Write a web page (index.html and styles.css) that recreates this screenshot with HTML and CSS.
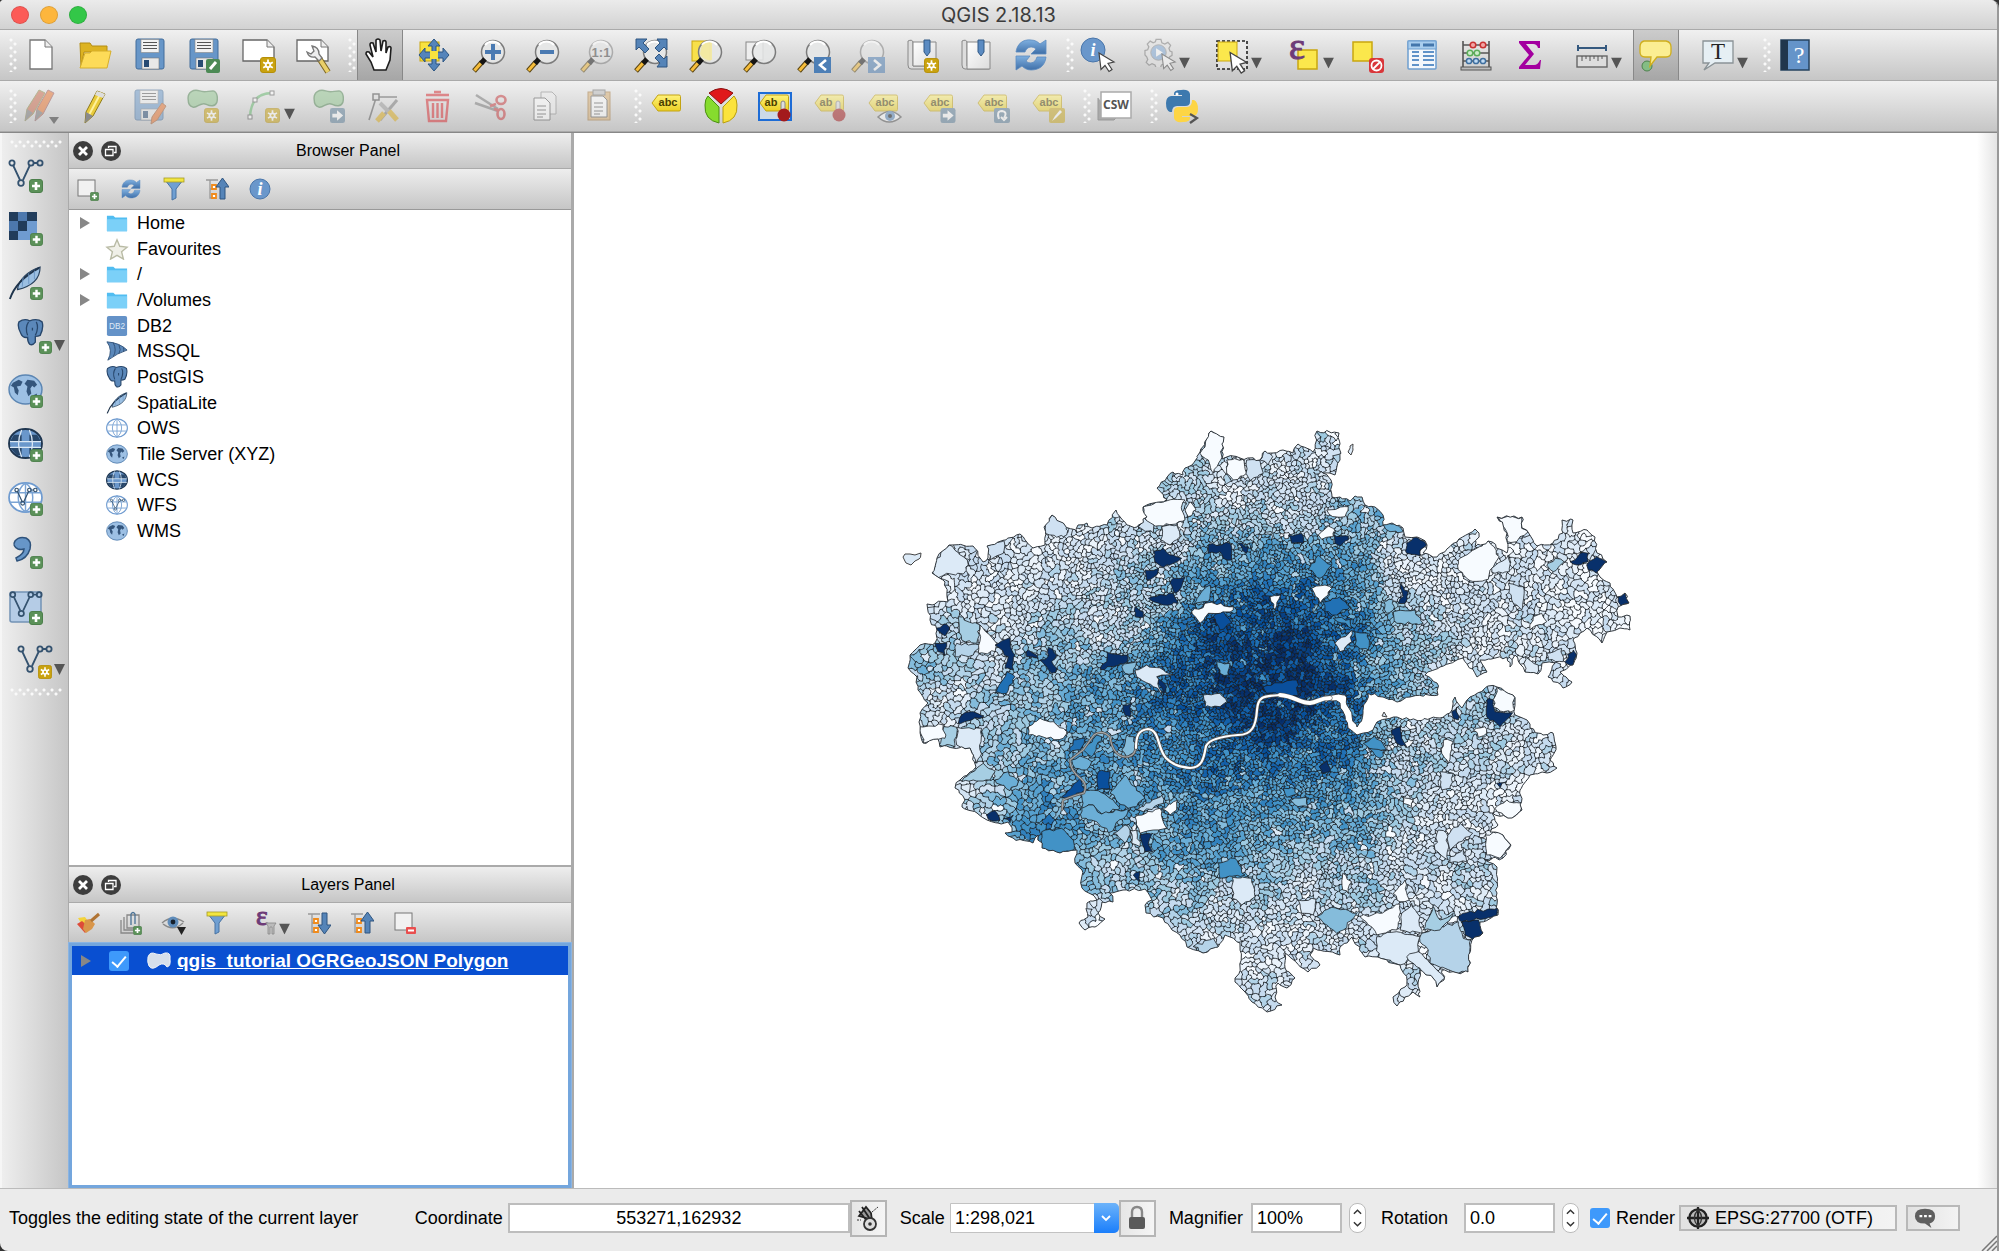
FILE: index.html
```html
<!DOCTYPE html>
<html lang="en">
<head>
<meta charset="utf-8">
<title>QGIS 2.18.13</title>
<link rel="stylesheet" href="styles.css">
</head>
<body>
<svg class="symbols" aria-hidden="true">
  <defs>
    <linearGradient id="gBlue" x1="0" y1="0" x2="0" y2="1"><stop offset="0" stop-color="#7fb0e0"/><stop offset="1" stop-color="#3f6fa8"/></linearGradient>
    <linearGradient id="gPage" x1="0" y1="0" x2="1" y2="1"><stop offset="0" stop-color="#fff"/><stop offset="1" stop-color="#dcdcdc"/></linearGradient>
    <linearGradient id="gYellow" x1="0" y1="0" x2="0" y2="1"><stop offset="0" stop-color="#fff27a"/><stop offset="1" stop-color="#ecd023"/></linearGradient>
  </defs>
  <symbol id="plus" viewBox="0 0 14 14"><rect x=".5" y=".5" width="13" height="13" rx="2.5" fill="#5b9159" stroke="#4c7f4b"/><path d="M7 3v8M3 7h8" stroke="#fff" stroke-width="2.6"/></symbol>
  <symbol id="star" viewBox="0 0 16 16"><rect x=".5" y=".5" width="15" height="15" rx="2.5" fill="#c9a20f" stroke="#b58f08"/><path d="M8 2.5v11M3.2 5.2l9.6 5.6M12.8 5.2l-9.6 5.6" stroke="#fff" stroke-width="1.8"/><circle cx="8" cy="8" r="3.2" fill="#fff"/><circle cx="8" cy="8" r="1.3" fill="#c9a20f"/></symbol>
  <symbol id="go" viewBox="0 0 16 16"><rect width="16" height="16" rx="2.5" fill="#5d7f99"/><path d="M2.500 6h5V2.500L14 8l-6.500 5.500V10h-5z" fill="#fff"/></symbol>
  <symbol id="lens" viewBox="0 0 40 40"><circle cx="24" cy="17" r="11.500" fill="#e6e7e7" fill-opacity=".85" stroke="#7b7b7b" stroke-width="1.500"/><path d="M16 10a10 10 0 0 1 15 0" fill="none" stroke="#fff" stroke-width="2"/><path d="M5 36l8-9" stroke="#5a4410" stroke-width="5"/><path d="M5.500 35.500l7-8" stroke="#f6bd3b" stroke-width="3"/><path d="M12 28.500l4-4.500" stroke="#151515" stroke-width="5"/></symbol>
  <symbol id="floppy" viewBox="0 0 40 40"><rect x="6" y="4" width="28" height="30" rx="2" fill="#6796c8" stroke="#426c9b"/><rect x="11" y="4.500" width="18" height="13" fill="#f2f2f2" stroke="#888" stroke-width=".6"/><path d="M13 7.500h14M13 10.500h14M13 13.500h14" stroke="#555"/><rect x="12" y="23" width="17" height="11" fill="#e8e8e8" stroke="#777" stroke-width=".6"/><rect x="14" y="25" width="5" height="7" fill="#284b73"/></symbol>
  <symbol id="refresh" viewBox="0 0 40 40"><path d="M5 17C6 9 12 4 20 5c4 0 7 2 9 4l6-4v14H20l5-5c-3-3-9-3-11 3z" fill="url(#gBlue)" stroke="#5c8bc0" stroke-width=".8"/><path d="M35 22c-1 9-7 13-15 13-4 0-7-2-9-4l-6 4V21h14l-4 5c3 3 9 3 11-4z" fill="url(#gBlue)" stroke="#5c8bc0" stroke-width=".8"/></symbol>
  <symbol id="cursor" viewBox="0 0 18 20"><path d="M1 1l15 9-6 1.500 4 6-3 2-4-6-4 4z" fill="#fff" stroke="#444" stroke-width="1.200"/></symbol>
  <symbol id="gear" viewBox="0 0 30 30"><path d="M12.500 1.500h5l1 3.500 3 1.200 3.200-1.700 2.800 3-1.700 3.200 1 2.800 2.200 1v3.500l-2.600 1.500-1 2.800 1.700 3-3 3-3-1.700-3 1.200-1.100 3h-4.500l-1.200-3-3-1.200-3 1.600-3-3 1.600-3-1.100-2.700L1 17.500V13l2.800-.8 1.200-3-1.600-3 3-3L9.500 5l2.200-1z" fill="#e4e4e4" stroke="#777" stroke-width="1.300"/><circle cx="15" cy="15" r="8" fill="#7da7d6" stroke="#888"/><path d="M12.500 10.500l7 4.500-7 4.500z" fill="#fff"/></symbol>
  <symbol id="tag" viewBox="0 0 30 18"><path d="M1 9l6-8h21q1.500 0 1.500 1.500v13q0 1.500-1.500 1.500H7z" fill="url(#gYellow)" stroke="#c3a313"/></symbol>
  <symbol id="blob" viewBox="0 0 32 22"><path d="M1 11C0 3 7 0 13 2c5 2 9 0 14 0 5 1 5 8 4 12-2 5-7 4-11 2-6-3-9 4-14 3-4-1-5-4-5-8z" fill="#8fc48d" stroke="#4f8351" stroke-width="1.500"/></symbol>
  <symbol id="page" viewBox="0 0 40 40"><path d="M9 5h15l7 7v22H9z" fill="#fff" stroke="#777" stroke-width="1.300"/><path d="M24 5v7h7" fill="#eee" stroke="#777"/></symbol>
  <symbol id="wide" viewBox="0 0 40 40"><path d="M4 5h24l7 7v14H4z" fill="#fff" stroke="#666" stroke-width="1.300"/><path d="M28 5v7h7" fill="#eee" stroke="#777"/></symbol>
  <symbol id="pencil" viewBox="0 0 24 36"><path d="M14 3l8 3-12 22-8 7 1-11z" fill="#e9cb3b" stroke="#8e7a1a"/><path d="M18 4.500L6 27" stroke="#fff19a" stroke-width="2"/><path d="M3 24l7 4-8 7z" fill="#8a8a8a"/><path d="M14 3l8 3-2 4-8-3z" fill="#ddd"/></symbol>
  <symbol id="vee" viewBox="0 0 36 36"><g fill="none" stroke="#34526f" stroke-width="1.800"><path d="M5 8l7 15M15 23l7-15M26 6h4"/><circle cx="4" cy="6" r="2.600"/><circle cx="13" cy="26" r="2.800"/><circle cx="23" cy="6" r="2.600"/><circle cx="32" cy="6" r="2.600"/></g></symbol>
  <symbol id="feather" viewBox="0 0 36 36"><path d="M34 1c0 11-7 20-24 24C11 15 21 5 34 1z" fill="#9bbfe2" stroke="#27405c" stroke-width="1.200"/><path d="M33 2C20 9 7 20 2 35" fill="none" stroke="#1f344c" stroke-width="2"/><path d="M16 12l-1 10M22 8l0 11M28 5v9" stroke="#6b96c4" fill="none"/></symbol>
  <symbol id="elephant" viewBox="0 0 28 28"><path d="M2 3q6-4 11-1 8-3 13 1 2 6-2 14-2 1-5 1l0 6q-3 4-6 2-2-2-2-7-5 1-7-4Q0 8 2 3z" fill="#5b88ba" stroke="#27466b" stroke-width="1.400"/><path d="M12 3q-4 6-1 14M20 3q3 6-1 14M16 9v3" fill="none" stroke="#27466b" stroke-width="1.300"/></symbol>
  <symbol id="globeMap" viewBox="0 0 36 32"><ellipse cx="18" cy="16" rx="17" ry="15" fill="#9dc0e4" stroke="#5c86b3" stroke-width="1.500"/><path d="M5 9l6-3 4 2-2 4-4 1 2 4-1 5-3-3-1-5-3-2zM20 6l7 1 3 4-3 3-2-2-2 3 1 5-3 3-2-5 1-5-3-3zM26 22l4-2-1 4z" fill="#34557c"/></symbol>
  <symbol id="globeGrid" viewBox="0 0 36 32"><ellipse cx="18" cy="16" rx="17" ry="15" fill="#fff" stroke="#6f9bd0" stroke-width="1.800"/><path d="M2 11h32M2 21h32M18 1v30M18 1C8 8 8 24 18 31M18 1c10 7 10 23 0 30" fill="none" stroke="#7ba4d4" stroke-width="1.500"/></symbol>
  <symbol id="globeDark" viewBox="0 0 36 32"><ellipse cx="18" cy="16" rx="17" ry="15" fill="#6a97cb" stroke="#1f3650" stroke-width="2"/><path d="M6 7h8v7H2zM22 7h8l4 7H22zM2 20h12v8H9zM22 20h12l-7 8h-5z" fill="#28476a"/><path d="M2 14h32M2 20h32M14 2c-4 9-4 19 0 28M22 2c4 9 4 19 0 28" fill="none" stroke="#dce8f4" stroke-width="1.300"/></symbol>
  <symbol id="folder" viewBox="0 0 24 20"><path d="M1 2h7l2 2h13v15H1z" fill="#51bdf1"/><path d="M1 6h22v13H1z" fill="#7bd0f8"/></symbol>
  <symbol id="funnel" viewBox="0 0 22 24"><path d="M2 3l7 9v11l4-2v-9l7-9z" fill="#6f9fd2" stroke="#4873a3"/><rect x="1" y="1" width="20" height="4" fill="#f2e640" stroke="#a79c25" stroke-width=".8"/></symbol>
  <symbol id="upTree" viewBox="0 0 24 24"><path d="M1 3h12M5 3v18h5M5 12h5" fill="none" stroke="#999" stroke-width="1.300"/><path d="M7 8h4v4H7zM7 17h4v4H7z" fill="#fff" stroke="#f08b1c" stroke-width="1.800"/><path d="M15 22V10h-4l6.500-9L24 10h-4v12z" fill="#5584b8" stroke="#2f5580"/></symbol>
  <symbol id="downTree" viewBox="0 0 24 24"><path d="M1 3h12M5 3v18h5M5 12h5" fill="none" stroke="#999" stroke-width="1.300"/><path d="M7 8h4v4H7zM7 17h4v4H7z" fill="#fff" stroke="#f08b1c" stroke-width="1.800"/><path d="M15 2v12h-4l6.500 9 6.500-9h-4V2z" fill="#5584b8" stroke="#2f5580"/></symbol>
  <symbol id="close" viewBox="0 0 20 20"><circle cx="10" cy="10" r="10" fill="#3d3d3d"/><path d="M6 6l8 8M14 6l-8 8" stroke="#fff" stroke-width="2.800"/></symbol>
  <symbol id="float" viewBox="0 0 20 20"><circle cx="10" cy="10" r="10" fill="#3d3d3d"/><path d="M7.500 7V5.500h7.500v6h-2M4.500 8.500h7.500v6H4.500z" fill="none" stroke="#fff" stroke-width="1.300"/></symbol>
  <symbol id="arrow" viewBox="0 0 12 12"><path d="M0 0h12L6 12z" fill="#555"/></symbol>
</svg>

<div class="window">
  <header class="titlebar">
    <div class="lights"><button class="light red" aria-label="Close window"></button><button class="light amber" aria-label="Minimise window"></button><button class="light green" aria-label="Zoom window"></button></div>
    <h1 class="title">QGIS 2.18.13</h1>
  </header>

  <nav class="toolbar" aria-label="Project and navigation">
    <span class="grip"></span>
    <div class="group file-group">
      <button class="tool" aria-label="New project"><svg viewBox="0 0 40 40"><use href="#page"/></svg></button>
      <button class="tool" aria-label="Open project"><svg viewBox="0 0 40 40"><path d="M5 8h10l2 3h15v6H9L6 32z" fill="#ddb321" stroke="#b48d12"/><path d="M10 18h5l2-2h19l-4 17H5z" fill="#fddb58" stroke="#d6ae2a"/></svg></button>
      <button class="tool" aria-label="Save"><svg viewBox="0 0 40 40"><use href="#floppy"/></svg></button>
      <button class="tool" aria-label="Save as"><svg viewBox="0 0 40 40"><use href="#floppy"/><rect x="22" y="24" width="14" height="14" rx="2" fill="#4c8a55"/><path d="M26 34l6-7" stroke="#fff" stroke-width="3"/></svg></button>
      <button class="tool" aria-label="New composer"><svg viewBox="0 0 40 40"><use href="#wide"/><use href="#star" x="21" y="22" width="16" height="16"/></svg></button>
      <button class="tool" aria-label="Composer manager"><svg viewBox="0 0 40 40"><use href="#wide"/><path d="M26 23l9 14" stroke="#7a6420" stroke-width="6"/><path d="M26 23l9 14" stroke="#e9cf6a" stroke-width="4"/><path d="M14 17q2 6 8 5l4 4 3-3-3-4q0-7-7-8l2 5-3 3z" fill="#eee" stroke="#777" stroke-width="1.300"/></svg></button>
    </div>
    <span class="grip"></span>
    <div class="group nav-group">
      <button class="tool pressed" aria-label="Pan map"><svg viewBox="0 0 40 40"><path d="M14 35l-3-8-5-8q0-3 3-2l4 5-3-12q0-3 3-2l3 9 0-12q2-2 4 0l1 11 2-10q3-1 3 1l0 11 2-6q3-1 3 1l-1 12-4 10z" fill="#fff" stroke="#1d1d1d" stroke-width="1.600"/></svg></button>
      <button class="tool" aria-label="Pan to selection"><svg viewBox="0 0 40 40"><rect x="6" y="7" width="19" height="19" fill="#f8e23f" stroke="#c9a60f"/><path d="M20 4l6 7h-4v6h7v-4l6 7-6 7v-4h-7v6h4l-6 7-6-7h4v-6h-7v4l-6-7 6-7v4h7v-6h-4z" fill="#5484bb" stroke="#2b5583"/><rect x="16" y="16" width="8" height="8" fill="#f8e23f"/></svg></button>
      <button class="tool" aria-label="Zoom in"><svg viewBox="0 0 40 40"><use href="#lens"/><path d="M24 9v16M16 17h16" stroke="#4a7ab2" stroke-width="4"/></svg></button>
      <button class="tool" aria-label="Zoom out"><svg viewBox="0 0 40 40"><use href="#lens"/><path d="M17 17h14" stroke="#4a7ab2" stroke-width="4"/></svg></button>
      <button class="tool dim" aria-label="Zoom to native resolution"><svg viewBox="0 0 40 40"><use href="#lens"/><text x="24" y="22" text-anchor="middle" class="glyph-one">1:1</text></svg></button>
      <button class="tool" aria-label="Zoom full"><svg viewBox="0 0 40 40"><use href="#lens"/><path d="M5 4h11l-4 4 6 6-4 4-6-6-3 3zM36 4H26l3 4-5 5 4 4 5-5 3 3zM36 32H26l3-4-5-5 4-4 5 5 3-3z" fill="#5584b8" stroke="#2f5580"/></svg></button>
      <button class="tool" aria-label="Zoom to selection"><svg viewBox="0 0 40 40"><rect x="6" y="6" width="18" height="20" fill="#f8e04a" stroke="#c9a60f"/><use href="#lens"/><path d="M16 10q6-4 10-2v17q-8 1-12-6z" fill="#f6e98e" opacity=".7"/></svg></button>
      <button class="tool" aria-label="Zoom to layer"><svg viewBox="0 0 40 40"><rect x="6" y="7" width="17" height="18" fill="#eee" stroke="#888"/><use href="#lens"/></svg></button>
      <button class="tool" aria-label="Zoom last"><svg viewBox="0 0 40 40"><use href="#lens"/><rect x="20" y="22" width="17" height="16" fill="#4d7fb6"/><path d="M32 25l-6 5 6 5" fill="none" stroke="#fff" stroke-width="2.600"/></svg></button>
      <button class="tool dim" aria-label="Zoom next"><svg viewBox="0 0 40 40"><use href="#lens"/><rect x="20" y="22" width="17" height="16" fill="#4d7fb6"/><path d="M26 25l6 5-6 5" fill="none" stroke="#fff" stroke-width="2.600"/></svg></button>
      <button class="tool" aria-label="New bookmark"><svg viewBox="0 0 40 40"><path d="M5 6q4-2 5 1v24h22v3H8q-3 0-3-4z" fill="#ddd" stroke="#888"/><path d="M10 7h23v24H10z" fill="url(#gPage)" stroke="#888"/><path d="M21 5h6v12l-3 4-3-4z" fill="#5b8bc2" stroke="#335a86"/><use href="#star" x="21" y="23" width="15" height="15"/></svg></button>
      <button class="tool" aria-label="Show bookmarks"><svg viewBox="0 0 40 40"><path d="M5 6q4-2 5 1v24h22v3H8q-3 0-3-4z" fill="#ddd" stroke="#888"/><path d="M10 7h23v27H10z" fill="url(#gPage)" stroke="#888"/><path d="M21 5h6v12l-3 4-3-4z" fill="#5b8bc2" stroke="#335a86"/></svg></button>
      <button class="tool" aria-label="Refresh"><svg viewBox="0 0 40 40"><use href="#refresh"/></svg></button>
    </div>
    <span class="grip"></span>
    <div class="group">
      <button class="tool" aria-label="Identify features"><svg viewBox="0 0 40 40"><circle cx="15" cy="15" r="12" fill="#6a97cb" stroke="#4a76aa"/><text x="15" y="21" text-anchor="middle" class="glyph-i">i</text><use href="#cursor" x="20" y="16" width="18" height="22"/></svg></button>
      <button class="tool drop" aria-label="Run feature action"><svg class="dim" viewBox="0 0 40 40"><use href="#gear" x="4" y="3" width="29" height="29"/><use href="#cursor" x="21" y="17" width="16" height="20"/></svg><svg class="caret" viewBox="0 0 12 12"><use href="#arrow"/></svg></button>
      <button class="tool drop" aria-label="Select features"><svg viewBox="0 0 40 40"><rect x="5" y="6" width="30" height="28" fill="#f4f4f4" fill-opacity=".4" stroke="#222" stroke-width="1.600" stroke-dasharray="3 2"/><rect x="6" y="7" width="19" height="19" fill="#fbe74c" stroke="#c9a60f"/><use href="#cursor" x="17" y="16" width="20" height="23"/></svg><svg class="caret" viewBox="0 0 12 12"><use href="#arrow"/></svg></button>
      <button class="tool drop" aria-label="Select by expression"><svg viewBox="0 0 40 40"><rect x="14" y="15" width="19" height="19" fill="#fbe74c" stroke="#c9a60f" stroke-width="1.500"/><text x="5" y="24" class="glyph-eps">ε</text></svg><svg class="caret" viewBox="0 0 12 12"><use href="#arrow"/></svg></button>
      <button class="tool" aria-label="Deselect features"><svg viewBox="0 0 40 40"><rect x="5" y="7" width="19" height="19" fill="#fbe74c" stroke="#c9a60f" stroke-width="1.500"/><rect x="21" y="23" width="15" height="15" rx="3" fill="#d9363a"/><circle cx="28.500" cy="30.500" r="5" fill="none" stroke="#fff" stroke-width="1.800"/><path d="M25 34l7-7" stroke="#fff" stroke-width="1.800"/></svg></button>
      <button class="tool" aria-label="Open attribute table"><svg viewBox="0 0 40 40"><rect x="6" y="6" width="28" height="28" rx="1" fill="#f3f7fb" stroke="#6d9ed0" stroke-width="1.500"/><rect x="6" y="6" width="28" height="8" fill="#a8cdee" stroke="#6d9ed0"/><path d="M9 10h9M21 10h11" stroke="#4376ac" stroke-width="3"/><path d="M10 17h7M21 17h11M10 21h7M21 21h11M10 25h7M21 25h11M10 30h7M21 30h11" stroke="#5f92c8" stroke-width="1.800"/></svg></button>
      <button class="tool" aria-label="Field calculator"><svg viewBox="0 0 40 40"><path d="M7 6v26M33 6v26M7 10h26M7 18h26M7 26h26" stroke="#555" stroke-width="1.600"/><rect x="5" y="32" width="30" height="3" fill="#bbb" stroke="#555"/><g stroke-width="1.500"><g fill="#f2a5a5" stroke="#c83232"><circle cx="17" cy="10" r="2.800"/><circle cx="27" cy="10" r="2.800"/></g><g fill="#cdeccb" stroke="#5cae5a"><circle cx="14" cy="18" r="2.800"/><circle cx="21" cy="18" r="2.800"/></g><g fill="#c2dcf4" stroke="#3f6f9f"><circle cx="13" cy="26" r="2.600"/><circle cx="20" cy="26" r="2.600"/><circle cx="27" cy="26" r="2.600"/></g></g></svg></button>
      <button class="tool" aria-label="Statistical summary"><svg viewBox="0 0 40 40"><path d="M9 6h21v7h-2q-1-4-5-4h-7l8 10-9 11h9q4 0 6-5h1l-1 9H9v-2l10-12L9 8z" fill="#a3009f"/></svg></button>
      <button class="tool drop" aria-label="Measure"><svg viewBox="0 0 40 40"><path d="M6 13h28M6 10v6M34 10v6" stroke="#35597f" stroke-width="2"/><rect x="5" y="21" width="30" height="11" fill="#ddd" stroke="#666" stroke-width="1.400"/><path d="M10 21v5M14 21v3M18 21v5M22 21v3M26 21v5M30 21v3" stroke="#555"/></svg><svg class="caret" viewBox="0 0 12 12"><use href="#arrow"/></svg></button>
      <button class="tool pressed" aria-label="Map tips"><svg viewBox="0 0 40 40"><ellipse cx="11" cy="31" rx="5" ry="5" fill="#84bd84" stroke="#4e824e"/><path d="M8 6h22q5 1 5 6v5q0 5-5 5h-9l-7 9 1-9H9q-5 0-5-5v-5q0-5 4-6z" fill="#fbee92" stroke="#cfae1d" stroke-width="1.300"/></svg></button>
      <button class="tool drop" aria-label="Text annotation"><svg viewBox="0 0 40 40"><path d="M5 6h30v22H17L6 35l5-7H5z" fill="#e6eff4" stroke="#8a9296" stroke-width="1.300"/><text x="20" y="24" text-anchor="middle" class="glyph-t">T</text></svg><svg class="caret" viewBox="0 0 12 12"><use href="#arrow"/></svg></button>
    </div>
    <span class="grip"></span>
    <button class="tool" aria-label="Help"><svg viewBox="0 0 40 40"><rect x="6" y="5" width="28" height="30" fill="#6594c9" stroke="#26435f" stroke-width="1.500"/><rect x="6" y="5" width="7" height="30" fill="#20364d"/><text x="24" y="28" text-anchor="middle" class="glyph-q">?</text></svg></button>
  </nav>

  <nav class="toolbar" aria-label="Digitizing and labels">
    <span class="grip"></span>
    <div class="group">
      <button class="tool dim" aria-label="Current edits"><svg viewBox="0 0 40 40"><path d="M18 4l6 3-12 21-8 7 2-12z" fill="#c9684a" stroke="#884"/><path d="M27 4l6 3-11 21-8 7 2-12z" fill="#e8722d" stroke="#955"/><path d="M6 23l6 4-8 8zM16 23l6 4-8 8z" fill="#777"/><path d="M28 31h10l-5 7z" fill="#333"/></svg></button>
      <button class="tool" aria-label="Toggle editing"><svg viewBox="0 0 40 40"><use href="#pencil" x="8" y="2" width="24" height="36"/></svg></button>
      <button class="tool dim" aria-label="Save layer edits"><svg viewBox="0 0 40 40"><use href="#floppy"/><path d="M33 17l4 3-9 14-6 4 1-7z" fill="#e8722d" stroke="#a65a2d"/></svg></button>
      <button class="tool dim" aria-label="Add feature"><svg viewBox="0 0 40 40"><use href="#blob" x="4" y="3" width="31" height="21"/><use href="#star" x="21" y="22" width="15" height="15"/></svg></button>
      <button class="tool drop" aria-label="Add curve"><svg class="dim" viewBox="0 0 40 40"><path d="M5 31q1-24 22-24" fill="none" stroke="#62b56a" stroke-width="2.500"/><g fill="#fff" stroke="#555"><rect x="3" y="29" width="4" height="4"/><rect x="8" y="12" width="4" height="4"/><rect x="25" y="5" width="4" height="4"/></g><use href="#star" x="20" y="22" width="15" height="15"/></svg><svg class="caret" viewBox="0 0 12 12"><use href="#arrow"/></svg></button>
      <button class="tool dim" aria-label="Move feature"><svg viewBox="0 0 40 40"><use href="#blob" x="4" y="3" width="31" height="21"/><use href="#go" x="21" y="22" width="15" height="15"/></svg></button>
      <button class="tool dim" aria-label="Node tool"><svg viewBox="0 0 40 40"><path d="M6 34l7-22M16 11h18" stroke="#555" stroke-width="1.600"/><rect x="10" y="8" width="6" height="6" fill="#ddd" stroke="#444" stroke-width="1.500"/><path d="M34 14L17 34" stroke="#777" stroke-width="3"/><path d="M17 17l9 9" stroke="#999" stroke-width="4"/><path d="M26 25l8 9M21 27l-7 8" stroke="#d8a91a" stroke-width="5"/></svg></button>
      <button class="tool dim" aria-label="Delete selected"><svg viewBox="0 0 40 40"><path d="M9 9h23M17 6h7M10 14h21l-2 21H12zM16 17v15M20.500 17v15M25 17v15" fill="none" stroke="#d62b30" stroke-width="2.400"/></svg></button>
      <button class="tool dim" aria-label="Cut features"><svg viewBox="0 0 40 40"><path d="M4 17l23 8M5 9l22 14" stroke="#777" stroke-width="2.500"/><g fill="none" stroke="#c73a3d" stroke-width="2.600"><ellipse cx="30" cy="14" rx="4.500" ry="4"/><ellipse cx="30" cy="28" rx="3.500" ry="5"/><path d="M25 18l-6 2M27 24l-4-1"/></g></svg></button>
      <button class="tool dim" aria-label="Copy features"><svg viewBox="0 0 40 40"><path d="M16 6h11l4 4v18H16z" fill="#eee" stroke="#888"/><path d="M9 12h11l5 5v17H9z" fill="#fff" stroke="#555"/><path d="M12 20h9M12 24h9M12 28h9M12 31h6" stroke="#555"/></svg></button>
      <button class="tool dim" aria-label="Paste features"><svg viewBox="0 0 40 40"><rect x="9" y="6" width="22" height="28" fill="#d9ae70" stroke="#a4763a"/><path d="M12 10h12l4 4v17H12z" fill="#fff" stroke="#555"/><rect x="14" y="4" width="12" height="5" fill="#bbb" stroke="#666"/><path d="M15 17h9M15 21h9M15 25h9M15 28h6" stroke="#555"/></svg></button>
    </div>
    <span class="grip"></span>
    <div class="group label-group">
      <button class="tool" aria-label="Layer labeling options"><svg viewBox="0 0 40 40"><use href="#tag" x="5" y="8" width="30" height="18"/><text x="22" y="20" text-anchor="middle" class="glyph-abc">abc</text></svg></button>
      <button class="tool" aria-label="Diagram options"><svg viewBox="0 0 40 40"><path d="M20 18L8 7q12-9 24 0z" fill="#e0181b" stroke="#8b1010"/><path d="M18 21v16Q3 34 4 19q0-6 3-9z" fill="#86dc2e" stroke="#4b8f12"/><path d="M22 21v16q15-3 14-18 0-6-3-9z" fill="#fbe33c" stroke="#b89e10"/></svg></button>
      <button class="tool" aria-label="Highlight pinned labels"><svg viewBox="0 0 40 40"><rect x="4" y="7" width="32" height="27" fill="#cbd9e8" stroke="#1d6cd6" stroke-width="2"/><use href="#tag" x="4" y="8" width="30" height="18"/><text x="16" y="20" text-anchor="middle" class="glyph-abc">ab</text><rect x="26" y="15" width="4" height="14" rx="2" fill="#ddd" stroke="#888"/><circle cx="29" cy="29" r="6.500" fill="#a31a1c"/></svg></button>
      <button class="tool dim" aria-label="Pin labels"><svg viewBox="0 0 40 40"><use href="#tag" x="4" y="8" width="30" height="18"/><text x="16" y="20" text-anchor="middle" class="glyph-abc">ab</text><rect x="26" y="15" width="4" height="14" rx="2" fill="#ddd" stroke="#888"/><circle cx="29" cy="29" r="6.500" fill="#a31a1c"/></svg></button>
      <button class="tool dim" aria-label="Show or hide labels"><svg viewBox="0 0 40 40"><use href="#tag" x="4" y="8" width="30" height="18"/><text x="21" y="20" text-anchor="middle" class="glyph-abc">abc</text><path d="M14 31q12-11 23 0-12 10-23 0z" fill="#fff" stroke="#555" stroke-width="1.500"/><circle cx="26" cy="30" r="5" fill="#5787ba"/><circle cx="26" cy="30" r="2" fill="#111"/></svg></button>
      <button class="tool dim" aria-label="Move label"><svg viewBox="0 0 40 40"><use href="#tag" x="4" y="8" width="30" height="18"/><text x="21" y="20" text-anchor="middle" class="glyph-abc">abc</text><use href="#go" x="21" y="22" width="16" height="15"/></svg></button>
      <button class="tool dim" aria-label="Rotate label"><svg viewBox="0 0 40 40"><use href="#tag" x="4" y="8" width="30" height="18"/><text x="21" y="20" text-anchor="middle" class="glyph-abc">abc</text><rect x="21" y="22" width="16" height="15" rx="2" fill="#5d7f99"/><path d="M26 33q-3-8 3-8 6 1 2 7M28 31l3 3 3-3" fill="none" stroke="#fff" stroke-width="2"/></svg></button>
      <button class="tool dim" aria-label="Change label"><svg viewBox="0 0 40 40"><use href="#tag" x="4" y="8" width="30" height="18"/><text x="21" y="20" text-anchor="middle" class="glyph-abc">abc</text><rect x="21" y="22" width="16" height="15" rx="2" fill="#c9a820"/><path d="M24 35l3-5 5-6 2 2-6 6z" fill="#fff"/></svg></button>
    </div>
    <span class="grip"></span>
    <button class="tool" aria-label="MetaSearch catalogue"><svg viewBox="0 0 40 40"><path d="M3 12v22h16l3-3" fill="#aaa" stroke="#999"/><rect x="6" y="6" width="30" height="26" fill="#fff" stroke="#aaa" stroke-width="1.500"/><text x="21" y="23" text-anchor="middle" class="glyph-csw">CSW</text></svg></button>
    <span class="grip"></span>
    <button class="tool" aria-label="Python console"><svg viewBox="0 0 40 40"><path d="M19 4q8-1 9 4v8q0 4-5 4h-8q-5 0-5 6H8q-4-1-4-9 0-6 5-7h11V9h-8q-1-5 7-5z" fill="#3d79ae"/><path d="M21 36q-8 1-9-4v-7q0-4 5-4h8q5 0 5-7h2q4 2 4 9 0 7-5 7H20v1h8q1 5-7 5z" fill="#fdd545"/><circle cx="15" cy="8" r="1.500" fill="#fff"/><path d="M28 28l7 4-7 5" fill="none" stroke="#555" stroke-width="2.200"/></svg></button>
  </nav>

  <div class="workspace">
    <nav class="sidebar" aria-label="Manage layers">
      <span class="grip flat"></span>
      <button class="source" aria-label="Add vector layer"><svg viewBox="0 0 36 36"><use href="#vee"/><use href="#plus" x="21" y="22" width="14" height="14"/></svg></button>
      <button class="source" aria-label="Add raster layer"><svg viewBox="0 0 36 36"><rect x="1" y="1" width="28" height="28" fill="#6f9bd0"/><path d="M1 1h9v9H1zM19 1h10v9H19zM10 10h9v10h-9zM1 20h9v9H1z" fill="#213c5b"/><path d="M10 1h9v9h-9zM1 10h9v10H1z" fill="#4d78ad"/><use href="#plus" x="22" y="22" width="13" height="13"/></svg></button>
      <button class="source" aria-label="Add SpatiaLite layer"><svg viewBox="0 0 36 36"><use href="#feather" x="0" y="1" width="34" height="34"/><use href="#plus" x="22" y="22" width="13" height="13"/></svg></button>
      <button class="source inset" aria-label="Add PostGIS layer"><svg viewBox="0 0 36 36"><use href="#elephant" x="0" y="0" width="27" height="27"/><use href="#plus" x="22" y="22" width="13" height="13"/></svg><svg class="caret" viewBox="0 0 12 12"><use href="#arrow"/></svg></button>
      <button class="source" aria-label="Add WMS layer"><svg viewBox="0 0 36 36"><use href="#globeMap" x="0" y="1" width="35" height="31"/><use href="#plus" x="22" y="22" width="13" height="13"/></svg></button>
      <button class="source" aria-label="Add WCS layer"><svg viewBox="0 0 36 36"><use href="#globeDark" x="0" y="1" width="35" height="31"/><use href="#plus" x="22" y="22" width="13" height="13"/></svg></button>
      <button class="source" aria-label="Add WFS layer"><svg viewBox="0 0 36 36"><use href="#globeGrid" x="0" y="1" width="35" height="31"/><use href="#vee" x="6" y="4" width="24" height="26"/><use href="#plus" x="22" y="22" width="13" height="13"/></svg></button>
      <button class="source" aria-label="Add delimited text layer"><svg viewBox="0 0 36 36"><path d="M7 6q4-5 11-3 6 3 4 11-3 10-13 12l-1-3q8-4 8-9-3 1-6 0-6-3-3-8z" fill="#6796c8" stroke="#2e527b" stroke-width="1.500"/><use href="#plus" x="22" y="21" width="13" height="13"/></svg></button>
      <button class="source" aria-label="Add virtual layer"><svg viewBox="0 0 36 36"><rect x="2" y="3" width="31" height="30" rx="2" fill="#b5cce6" stroke="#7392b5" stroke-width="1.500"/><use href="#vee" x="1" y="0" width="34" height="34"/><use href="#plus" x="21" y="22" width="14" height="14"/></svg></button>
      <button class="source inset" aria-label="New shapefile layer"><svg viewBox="0 0 36 36"><use href="#vee"/><use href="#star" x="21" y="22" width="14" height="14"/></svg><svg class="caret" viewBox="0 0 12 12"><use href="#arrow"/></svg></button>
      <span class="grip flat"></span>
    </nav>

    <aside class="docks">
      <section class="dock browser">
        <div class="dock-title"><button class="round" aria-label="Close Browser Panel"><svg viewBox="0 0 20 20"><use href="#close"/></svg></button><button class="round" aria-label="Float Browser Panel"><svg viewBox="0 0 20 20"><use href="#float"/></svg></button><h2>Browser Panel</h2></div>
        <div class="dock-tools">
          <button class="mini" aria-label="Add selected layers"><svg viewBox="0 0 24 24"><rect x="2" y="3" width="17" height="16" fill="#f1f1f1" stroke="#777"/><use href="#plus" x="14" y="15" width="9" height="9"/></svg></button>
          <button class="mini" aria-label="Refresh"><svg viewBox="0 0 24 24"><use href="#refresh"/></svg></button>
          <button class="mini" aria-label="Filter browser"><svg viewBox="0 0 24 24"><use href="#funnel"/></svg></button>
          <button class="mini" aria-label="Collapse all"><svg viewBox="0 0 24 24"><use href="#upTree"/></svg></button>
          <button class="mini" aria-label="Properties"><svg viewBox="0 0 24 24"><circle cx="12" cy="12" r="10" fill="#6a97cb" stroke="#4a76aa"/><text x="12" y="18" text-anchor="middle" class="glyph-i">i</text></svg></button>
        </div>
        <ul class="tree">
          <li><span class="expander"></span><svg viewBox="0 0 24 24"><use href="#folder" y="2" width="24" height="20"/></svg>Home</li>
          <li><span class="expander none"></span><svg viewBox="0 0 24 24"><path d="M12 2l3 7 8 1-6 5 2 8-7-4-7 4 2-8-6-5 8-1z" fill="#f0f0e8" stroke="#b9bba5" stroke-width="1.500"/></svg>Favourites</li>
          <li><span class="expander"></span><svg viewBox="0 0 24 24"><use href="#folder" y="2" width="24" height="20"/></svg>/</li>
          <li><span class="expander"></span><svg viewBox="0 0 24 24"><use href="#folder" y="2" width="24" height="20"/></svg>/Volumes</li>
          <li><span class="expander none"></span><svg viewBox="0 0 24 24"><rect x="1" y="1" width="22" height="22" rx="2" fill="#6492c8"/><text x="12" y="15" text-anchor="middle" class="glyph-db">DB2</text></svg>DB2</li>
          <li><span class="expander none"></span><svg viewBox="0 0 24 24"><path d="M1 2q14 1 22 9-10 3-21 11 6-11-1-20z" fill="#5b88ba" stroke="#34557c"/><path d="M8 3q4 8 0 15M14 5q3 6 0 10M19 8q1 3 0 5" fill="none" stroke="#2f4f76"/></svg>MSSQL</li>
          <li><span class="expander none"></span><svg viewBox="0 0 24 24"><use href="#elephant"/></svg>PostGIS</li>
          <li><span class="expander none"></span><svg viewBox="0 0 24 24"><use href="#feather"/></svg>SpatiaLite</li>
          <li><span class="expander none"></span><svg viewBox="0 0 24 24"><use href="#globeGrid"/></svg>OWS</li>
          <li><span class="expander none"></span><svg viewBox="0 0 24 24"><use href="#globeMap"/></svg>Tile Server (XYZ)</li>
          <li><span class="expander none"></span><svg viewBox="0 0 24 24"><use href="#globeDark"/></svg>WCS</li>
          <li><span class="expander none"></span><svg viewBox="0 0 24 24"><use href="#globeGrid"/><use href="#vee" x="4" y="4" width="17" height="17"/></svg>WFS</li>
          <li><span class="expander none"></span><svg viewBox="0 0 24 24"><use href="#globeMap"/></svg>WMS</li>
        </ul>
      </section>
      <section class="dock layers">
        <div class="dock-title"><button class="round" aria-label="Close Layers Panel"><svg viewBox="0 0 20 20"><use href="#close"/></svg></button><button class="round" aria-label="Float Layers Panel"><svg viewBox="0 0 20 20"><use href="#float"/></svg></button><h2>Layers Panel</h2></div>
        <div class="dock-tools">
          <button class="mini" aria-label="Layer styling"><svg viewBox="0 0 24 24"><path d="M2 7l7-1 5 7-6 4z" fill="#f3d33a"/><path d="M1 13l5-3 8 7-5 5z" fill="#dd4b39"/><path d="M9 9l5-1 5 5-3 5-6 4-3-4z" fill="#d9964a"/><path d="M15 10l8-7" stroke="#b07434" stroke-width="3"/></svg></button>
          <button class="mini" aria-label="Add group"><svg viewBox="0 0 24 24"><path d="M2 9v13h12M5 6v13h12M8 4h12v13H8z" fill="none" stroke="#888" stroke-width="1.300"/><path d="M12 14V3q2-3 4 0v10" fill="none" stroke="#4a7296" stroke-width="1.300"/><use href="#plus" x="14" y="15" width="9" height="9"/></svg></button>
          <button class="mini" aria-label="Manage visibility"><svg viewBox="0 0 24 24"><path d="M0 12Q10 3 22 11M1 13q10 8 20-1" fill="none" stroke="#888" stroke-width="1.300"/><circle cx="11" cy="11" r="5.500" fill="#5f8cba"/><circle cx="11" cy="11" r="2.400" fill="#16202c"/><path d="M15 16h9l-4.500 8z" fill="#222"/></svg></button>
          <button class="mini" aria-label="Filter legend"><svg viewBox="0 0 24 24"><use href="#funnel"/></svg></button>
          <button class="mini menu" aria-label="Filter by expression"><svg viewBox="0 0 24 24"><text x="0" y="14" class="glyph-eps">ε</text><path d="M10 12h10l-2 3v8h-2v-7h-2v7h-2v-8z" fill="#bbb" stroke="#888" stroke-width=".8"/></svg><svg class="caret" viewBox="0 0 12 12"><use href="#arrow"/></svg></button>
          <button class="mini" aria-label="Expand all"><svg viewBox="0 0 24 24"><use href="#downTree"/></svg></button>
          <button class="mini" aria-label="Collapse all"><svg viewBox="0 0 24 24"><use href="#upTree"/></svg></button>
          <button class="mini" aria-label="Remove layer"><svg viewBox="0 0 24 24"><rect x="2" y="2" width="17" height="17" fill="#f1f1f1" stroke="#777"/><rect x="13" y="16" width="10" height="7" rx="1" fill="#e94e4e"/><path d="M15 19.500h6" stroke="#fff" stroke-width="2"/></svg></button>
        </div>
        <div class="layer-list">
          <div class="layer-row"><span class="expander"></span><input type="checkbox" id="layer0" class="check" checked><svg viewBox="0 0 24 20"><path d="M1 6q2-6 8-3 5 2 9-1 6-1 5 6 1 7-3 8-3-5-8-2-7 6-10 1-2-4-1-9z" fill="#d5dfeb" stroke="#f0f3f7"/></svg><label for="layer0">qgis_tutorial OGRGeoJSON Polygon</label></div>
        </div>
      </section>
    </aside>

    <main class="map"><svg id="canvas" viewBox="574 134 1423 1053" role="img" aria-label="Population density choropleth"></svg></main>
  </div>

  <footer class="status">
    <span class="message">Toggles the editing state of the current layer</span>
    <label for="coord" class="lbl">Coordinate</label>
    <input id="coord" class="field coord" value="553271,162932">
    <button class="square" aria-label="Toggle extents"><svg viewBox="0 0 24 28"><path d="M3 12L10 3l5 6 1 8-6-3zM6 3l8 12M3 7l8 10" fill="#999" stroke="#222" stroke-width="1.800"/><circle cx="14" cy="20" r="6" fill="#ddd" stroke="#333" stroke-width="1.800"/><circle cx="14" cy="20" r="1.800" fill="#333"/><path d="M16 8l6-5M1 16h4" stroke="#333" stroke-dasharray="2 1"/></svg></button>
    <label for="scale" class="lbl scale-label">Scale</label>
    <span class="combo"><select id="scale"><option>1:298,021</option></select><span class="cap"><svg viewBox="0 0 12 8"><path d="M2 2l4 4 4-4" fill="none" stroke="#fff" stroke-width="1.800"/></svg></span></span>
    <button class="square" aria-label="Lock scale"><svg viewBox="0 0 24 28"><path d="M7 14V8q0-5 5-5t5 5v6" fill="none" stroke="#888" stroke-width="2.400"/><rect x="4" y="13" width="16" height="12" rx="2" fill="#5a5a5a"/></svg></button>
    <label for="mag" class="lbl mag-label">Magnifier</label>
    <input id="mag" class="field num" value="100%">
    <span class="spin"><button aria-label="Increase magnifier"><svg viewBox="0 0 10 6"><path d="M1 5l4-4 4 4"/></svg></button><button aria-label="Decrease magnifier"><svg viewBox="0 0 10 6"><path d="M1 1l4 4 4-4"/></svg></button></span>
    <label for="rot" class="lbl rot-label">Rotation</label>
    <input id="rot" class="field num" value="0.0">
    <span class="spin"><button aria-label="Increase rotation"><svg viewBox="0 0 10 6"><path d="M1 5l4-4 4 4"/></svg></button><button aria-label="Decrease rotation"><svg viewBox="0 0 10 6"><path d="M1 1l4 4 4-4"/></svg></button></span>
    <input type="checkbox" id="render" class="check" checked><label for="render" class="render-label">Render</label>
    <button class="flat-button crs"><svg viewBox="0 0 24 24"><circle cx="12" cy="12" r="9.500" fill="#bbb" stroke="#222" stroke-width="2.500"/><path d="M12 0v24M0 12h24" stroke="#222" stroke-width="2.500"/><path d="M12 3q-8 9 0 18M12 3q8 9 0 18" fill="none" stroke="#333" stroke-width="1.400"/></svg>EPSG:27700 (OTF)</button>
    <button class="flat-button log" aria-label="Messages"><svg viewBox="0 0 24 24"><path d="M12 2q11 0 11 8 0 6-6 8l2 5-7-5Q1 18 1 10q0-8 11-8z" fill="#5f5f5f"/><path d="M6 10h3M11 10h3M16 10h3" stroke="#fff" stroke-width="2.500"/></svg></button>
    <svg class="resize" viewBox="0 0 16 16"><path d="M1 16L16 1M6 16L16 6M11 16l5-5" stroke="#777" stroke-width="1.500"/></svg>
  </footer>
</div>
<script src="map.js"></script>
</body>
</html>
```

FILE: styles.css
```css
* { box-sizing: border-box; }

body {
  margin: 0;
  background: #333;
  color: #000;
  font: 18px/24px "Liberation Sans", Arial, sans-serif;
}

button {
  margin: 0;
  padding: 0;
  border: 0;
  background: none;
  color: inherit;
  font: inherit;
}

h1, h2, ul { margin: 0; padding: 0; font-weight: normal; }

.symbols { position: absolute; width: 0; height: 0; }

.window {
  display: flex;
  flex-direction: column;
  height: 100vh;
  overflow: hidden;
  border-right: 2px solid #999;
  border-radius: 4px 8px 0 8px;
  background: #ebebeb;
}

/* title bar */
.titlebar {
  display: flex;
  align-items: center;
  flex: none;
  height: 30px;
  padding: 0 11px;
  border-bottom: 1px solid #aaa;
  background: linear-gradient(#ebebeb, #d2d2d2);
}
.lights { display: flex; gap: 11px; width: 100px; }
.light { width: 18px; height: 18px; border: 1px solid rgba(0, 0, 0, .12); border-radius: 50%; }
.red { background: #fc5b57; }
.amber { background: #fdb63d; }
.green { background: #33c748; }
.title { flex: 1; margin-right: 100px; text-align: center; color: #3c3c3c; font: 20px/28px Inter, sans-serif; }

/* toolbars */
.toolbar {
  display: flex;
  flex: none;
  height: 51px;
  padding-left: 9px;
  border-bottom: 1px solid #aaa;
  background: linear-gradient(#f0f0f0, #c6c6c6);
}
.toolbar .grip:not(:first-child) { margin-left: 12px; }
.grip {
  flex: none;
  align-self: center;
  width: 9px;
  height: 34px;
  background:
    radial-gradient(circle at 2px 2px, #fafafa 1px, transparent 2px) 0 0 / 9px 8px,
    radial-gradient(circle at 6px 6px, #fafafa 1px, transparent 2px) 0 0 / 9px 8px;
}
.group { display: flex; gap: 8px; }
.file-group, .nav-group, .label-group { justify-content: space-between; gap: 0; }
.file-group { width: 318px; }
.nav-group { width: 697px; }
.label-group { width: 428px; }
.tool { display: flex; align-items: center; flex: none; width: 46px; padding: 0 3px; }
.tool svg { flex: none; width: 40px; height: 40px; overflow: visible; }
.drop { width: 56px; margin-left: 8px; }
.dim { opacity: .5; }
.pressed { background: linear-gradient(#ccc, #a6a6a6); box-shadow: inset 1px 0 #888, inset -1px 0 #888; }
.tool .caret { width: 11px; height: 12px; margin: 16px 0 0 -1px; }

/* body */
.workspace { display: flex; flex: 1; min-height: 0; border-top: 1px solid #888; }
.sidebar {
  flex: none;
  display: flex;
  flex-direction: column;
  width: 68px;
  padding-top: 7px;
  border-left: 2px solid #f6f6f6;
  background: linear-gradient(90deg, #eee, #c6c6c6);
}
.grip.flat {
  align-self: stretch;
  width: auto;
  height: 8px;
  margin: 0 6px 0 8px;
  background:
    radial-gradient(circle at 2px 2px, #fafafa 1px, transparent 2px) 0 0 / 8px 9px,
    radial-gradient(circle at 6px 6px, #fafafa 1px, transparent 2px) 0 0 / 8px 9px;
}
.source { display: flex; align-items: center; height: 54px; padding-left: 6px; flex: none; }
.source svg { flex: none; width: 36px; height: 36px; }
.inset { padding-left: 15px; }
.source .caret { width: 11px; height: 11px; margin: 16px 0 0 1px; }

.docks { display: flex; flex-direction: column; flex: none; width: 506px; padding-right: 3px; border-left: 1px solid #aaa; background: #aaa; }
.dock { display: flex; flex-direction: column; min-height: 0; }
.browser { flex: 1; background: #fff; }
.layers { flex: none; margin-top: 2px; }
.dock-title {
  display: flex;
  align-items: center;
  gap: 8px;
  height: 36px;
  padding: 0 4px;
  border-bottom: 1px solid #aaa;
  background: linear-gradient(#eee, #c6c6c6);
}
.dock-title h2 { flex: 1; text-align: center; font-size: 16px; line-height: 20px; }
.round { width: 20px; height: 20px; }
.round svg { display: block; width: 20px; height: 20px; }
.dock-tools {
  display: flex;
  align-items: center;
  gap: 19px;
  height: 41px;
  padding-left: 7px;
  border-bottom: 1px solid #999;
  background: linear-gradient(#eee, #c6c6c6);
}
.layers .dock-tools { height: 40px; }
.mini { width: 24px; height: 24px; }
.mini svg { display: block; width: 24px; height: 24px; overflow: visible; }
.mini.menu { display: flex; width: 42px; margin-left: 8px; }
.mini .caret { flex: none; width: 11px; height: 12px; margin: 12px 0 0 -1px; }
.layers .menu + .mini { margin-left: -10px; }

.tree {
  display: grid;
  grid-auto-rows: 1fr;
  align-content: start;
  height: 334px;
  list-style: none;
}
.tree li { display: flex; align-items: center; padding-left: 11px; }
.tree svg { width: 24px; height: 22px; margin-right: 8px; }
.expander { flex: none; width: 0; margin-right: 15px; border: 6px solid transparent; border-left: 10px solid #878787; border-right: 0; }
.expander.none { visibility: hidden; }

.layer-list { height: 245px; border: 3px solid #74a6dd; background: #fff; outline: 1px solid #8ab4e2; }
.layer-row { display: flex; align-items: center; height: 29px; padding-left: 9px; background: #094fd1; color: #fff; }
.layer-row svg { width: 24px; height: 20px; margin: 0 6px 0 18px; }
.layer-row label { font-size: 19px; font-weight: bold; text-decoration: underline; }
.layer-row .expander { margin-right: 18px; }

.check {
  appearance: none;
  flex: none;
  display: flex;
  justify-content: center;
  width: 20px;
  height: 20px;
  margin: 0;
  border-radius: 3px;
  background: #3e99fb;
}
.check:checked::after { content: ""; width: 6px; height: 12px; margin-top: 2px; border: solid #fff; border-width: 0 2px 2px 0; transform: rotate(40deg); }

.map { flex: 1; min-width: 0; background: linear-gradient(90deg, transparent calc(100% - 20px), #e4e4e4), #fff; }
.map svg { display: block; width: 100%; height: 100%; }

/* status bar */
.status {
  position: relative;
  display: flex;
  align-items: center;
  flex: none;
  height: 63px;
  padding: 0 37px 4px 9px;
  border-top: 1px solid #bbb;
}
.message { flex: 1; white-space: nowrap; }
.lbl { margin-right: 5px; }
.field { height: 30px; padding: 0 4px; border: 2px solid #bdbdbd; background: #fff; font: inherit; outline: 0; }
.coord { width: 342px; text-align: center; }
.square { display: flex; align-items: center; justify-content: center; width: 37px; height: 37px; border: 2px solid #b5b5b5; background: linear-gradient(90deg, #e6e6e6, #f5f5f5); }
.square svg { width: 24px; height: 28px; }
.scale-label, .mag-label { margin-left: 13px; }
.mag-label { margin-right: 8px; }
.rot-label { margin: 0 16px 0 15px; }
.combo { position: relative; width: 169px; height: 30px; }
.combo select { appearance: none; width: 100%; height: 30px; padding: 0 4px; border: 1px solid #c2c2c2; border-radius: 0 5px 5px 0; background: #fff; font: inherit; }
.cap { position: absolute; inset: 0 0 0 auto; display: flex; align-items: center; justify-content: center; width: 25px; border-radius: 0 5px 5px 0; background: linear-gradient(#6cb3fa, #1a7efb); pointer-events: none; }
.cap svg { width: 12px; height: 8px; }
.num { width: 91px; margin-right: 7px; }
.spin { display: flex; flex-direction: column; justify-content: space-evenly; width: 17px; height: 30px; border: 1px solid #bbb; border-radius: 8px; background: #fff; }
.spin button { display: flex; justify-content: center; }
.spin svg { width: 9px; height: 6px; fill: none; stroke: #333; stroke-width: 1.600; }
.spin + .check { margin: 0 6px 0 11px; }
.render-label { margin-right: 4px; }
.flat-button { display: flex; align-items: center; height: 26px; border: 2px solid #b8b8b8; background: linear-gradient(90deg, #e2e2e2, #f3f3f3); }
.flat-button svg { width: 22px; height: 22px; }
.crs { gap: 6px; width: 218px; padding-left: 6px; white-space: nowrap; }
.log { width: 54px; margin-left: 9px; padding-left: 6px; }
.resize { position: absolute; right: 0; bottom: 0; width: 16px; height: 16px; }

/* lettering inside icons */
.glyph-abc { font: bold 11px "Liberation Sans", sans-serif; fill: #4a3f00; }
.glyph-i { font: italic bold 18px "Liberation Serif", serif; fill: #fff; }
.glyph-one { font: bold 13px "Liberation Sans", sans-serif; fill: #444; }
.glyph-eps { font: 38px "Liberation Serif", serif; fill: #6d3b78; stroke: #6d3b78; stroke-width: 1px; }
.dock-tools .glyph-eps { font-size: 28px; }
.glyph-t { font: 23px "Liberation Serif", serif; fill: #222; }
.glyph-q { font: 24px "Liberation Serif", serif; fill: #fff; }
.glyph-csw { font: bold 12px "Noto Sans", sans-serif; fill: #555; }
.glyph-db { font: 9px "Liberation Sans", sans-serif; fill: #dfeaf6; }
```

FILE: map.js
```js
// Draws the choropleth: small census areas as irregular cells inside the city boundary.
const NS = 'http://www.w3.org/2000/svg';
const svg = document.getElementById('canvas');
let state = 20180;
const rnd = () => {
  state = (state + 0x6d2b79f5) | 0;
  let t = Math.imul(state ^ (state >>> 15), 1 | state);
  t = (t + Math.imul(t ^ (t >>> 7), 61 | t)) ^ t;
  return ((t ^ (t >>> 14)) >>> 0) / 4294967296;
};
const pts = s => s.trim().split(/\s+/).map(p => p.split(',').map(Number));

const boundary = pts(`949,545 937,558 932,573 945,582 948,602 927,604 930,620 937,630 935,643 920,645 910,655 908,668 917,677
918,690 928,703 920,713 919,722 923,743 938,739 940,747 970,748 976,767 960,780 955,788 965,800 962,807 977,813 987,820 998,823
1008,822 1012,832 1005,833 1013,838 1033,843 1038,835 1042,848 1060,853 1077,850 1075,863 1082,870 1082,888 1093,895 1097,900
1087,903 1088,917 1079,923 1085,930 1095,927 1105,919 1098,913 1102,902 1113,902 1110,893 1123,890 1145,889 1152,900 1145,905
1146,913 1163,918 1172,930 1180,935 1187,947 1203,953 1218,947 1225,935 1240,943 1240,967 1235,982 1245,992 1252,1002 1267,1012
1282,1005 1275,997 1278,983 1287,988 1295,978 1285,968 1285,953 1308,972 1320,965 1310,955 1313,948 1340,955 1340,947 1352,937
1365,957 1378,957 1400,965 1407,980 1405,987 1393,997 1397,1006 1405,997 1413,992 1420,997 1418,983 1420,970 1433,978 1437,987
1444,980 1442,970 1458,973 1468,972 1472,940 1483,933 1480,922 1498,915 1497,893 1497,867 1485,860 1503,858 1511,845 1503,835
1490,832 1498,825 1492,813 1512,818 1522,810 1520,790 1530,775 1547,773 1557,768 1550,760 1556,747 1553,733 1543,735 1530,728
1527,720 1515,715 1515,702 1513,695 1497,687 1488,686 1470,697 1462,708 1455,697 1450,713 1440,718 1410,720 1397,717 1377,722
1373,730 1357,735 1348,728 1345,716 1340,703 1333,701 1325,703 1324,695 1333,695 1345,695 1347,705 1357,727 1363,713 1368,693 1383,697 1397,702 1410,697
1438,695 1437,683 1425,675 1440,667 1463,658 1477,677 1487,672 1480,660 1507,657 1510,667 1515,655 1525,672 1538,674 1542,663
1555,663 1548,677 1563,688 1572,682 1560,672 1573,665 1577,653 1573,640 1587,628 1602,643 1607,632 1620,628 1630,630 1630,616
1618,617 1618,607 1629,603 1625,593 1617,597 1610,583 1600,577 1597,572 1607,562 1597,553 1595,537 1587,530 1573,533 1573,520
1562,520 1563,533 1553,543 1537,546 1528,532 1522,528 1522,517 1497,517 1507,533 1507,553 1488,541 1475,547 1479,533 1475,529
1457,542 1437,557 1423,553 1427,545 1417,537 1405,537 1403,528 1392,523 1383,525 1383,515 1375,507 1365,505 1362,497 1355,496
1350,501 1340,497 1332,497 1331,480 1323,473 1335,475 1340,460 1339,433 1317,431 1313,452 1298,444 1293,453 1283,450 1273,453
1265,451 1260,460 1240,458 1233,456 1222,459 1224,437 1211,431 1200,452 1192,465 1185,468 1183,475 1173,472 1157,488 1167,499
1143,507 1147,517 1137,527 1127,525 1116,510 1107,525 1092,528 1087,523 1078,525 1077,533 1052,515 1044,527 1045,545 1033,548
1020,534 987,546 988,558 983,562 973,546`);

// Shade control points: x, y, class 0..8
const shade = pts(`1290,650,7.8 1270,720,7.6 1220,640,7.2 1330,740,6 1180,690,6.2 1340,640,6.2 1220,760,5.8 1300,600,6.2 1290,560,4.6
1200,560,4.2 1350,570,4.6 1100,690,4.3 1080,740,4.3 1130,780,4.5 1200,830,4.8 1280,830,4 1350,820,4 1400,750,2.6 1380,670,3.8
1420,640,2.6 1000,700,3 950,700,1.4 930,660,3 1000,640,1.4 1000,590,.9 960,560,1 1080,560,1.2 1100,620,1.8 1050,660,3.2
1130,590,2.6 1170,540,1.6 1230,490,1.2 1210,530,2.8 1290,470,1.3 1300,520,2 1360,520,3.3 1400,560,1.1 1440,580,.7 1480,640,1.2
1520,580,1 1580,560,.7 1600,600,.7 1540,640,1.4 1480,720,2.5 1540,750,1.2 1430,730,2.2 1480,770,2.2 1450,820,.9 1500,800,.8
1470,880,1.8 1420,860,1.4 1350,880,2.6 1300,880,1.7 1300,930,1.3 1260,950,1.1 1260,990,1.6 1220,920,1.6 1180,900,2.6 1180,850,4.2
1120,870,2.4 1090,880,4 1090,920,1.2 1050,830,5 1000,800,3 970,780,1.6 1000,760,3 1040,790,4.5 1430,940,1 1370,930,1.8
1260,870,3.4 1240,690,7.6 1300,690,7.8 1260,610,6.6 1160,740,5 1340,690,6.8 1300,770,5.2`);

const ramp = ['#f7fbff', '#deebf7', '#c6dbef', '#9ecae1', '#6baed6', '#4292c6', '#2171b5', '#08519c', '#08306b'];
const mix = v => {
  const i = Math.min(7, Math.floor(v)), f = v - i;
  const c = k => [1, 3, 5].map(n => parseInt(ramp[k].substr(n, 2), 16));
  const a = c(i), b = c(i + 1);
  return `rgb(${a.map((n, k) => Math.round(n + (b[k] - n) * f)).join()})`;
};
const level = (x, y) => {
  let sum = 0, w = 0;
  for (const [px, py, v] of shade) {
    const k = 1 / Math.pow((px - x) ** 2 + (py - y) ** 2 + 60, 1.6);
    sum += v * k; w += k;
  }
  return sum / w;
};

const roughen = poly => poly.flatMap(([x, y], i) => {
  const [u, v] = poly[(i + 1) % poly.length];
  const n = Math.max(1, Math.round(Math.hypot(u - x, v - y) / 4));
  return Array.from({ length: n }, (_, k) => {
    const j = k ? 3 : 0;
    return [x + (u - x) * k / n + (rnd() - .5) * j, y + (v - y) * k / n + (rnd() - .5) * j];
  });
});
const inside = (x, y, poly) => {
  let hit = false;
  for (let i = 0, j = poly.length - 1; i < poly.length; j = i++) {
    const [a, b] = poly[i], [c, d] = poly[j];
    if ((b > y) !== (d > y) && x < (c - a) * (y - b) / (d - b) + a) hit = !hit;
  }
  return hit;
};
const fix = n => n.toFixed(1);
const toPath = p => 'M' + p.map(q => fix(q[0]) + ' ' + fix(q[1])).join('L') + 'Z';
const add = (parent, name, attrs) => {
  const el = document.createElementNS(NS, name);
  for (const k in attrs) el.setAttribute(k, attrs[k]);
  return parent.appendChild(el);
};

// Scatter small blocks, densest in the middle of the city
const edge = roughen(boundary);
const bins = new Map(), seeds = [];
const near = (x, y, reach) => {
  const out = [], bx = Math.floor(x / 8), by = Math.floor(y / 8);
  for (let i = -reach; i <= reach; i++) for (let j = -reach; j <= reach; j++) {
    const b = bins.get((bx + i) * 1000 + by + j);
    if (b) out.push(...b);
  }
  return out;
};
for (let n = 0; n < 160000; n++) {
  const x = 900 + rnd() * 735, y = 428 + rnd() * 590;
  const d = Math.hypot(x - 1270, y - 680);
  const r = Math.min(5.2, 2.7 + Math.max(0, d - 80) / 90) * (.55 + rnd() * .8);
  if (near(x, y, 1).some(s => Math.hypot(s.x - x, s.y - y) < r) || !inside(x, y, edge)) continue;
  const s = { x, y, id: seeds.length }, key = Math.floor(x / 8) * 1000 + Math.floor(y / 8);
  seeds.push(s);
  bins.has(key) ? bins.get(key).push(s) : bins.set(key, [s]);
}

// Voronoi cell of a block; every vertex keeps the neighbour across the side that follows it
const cell = s => {
  const { x, y } = s;
  let p = [[x - 12, y - 12, null], [x + 12, y - 12, null], [x + 12, y + 12, null], [x - 12, y + 12, null]];
  for (const t of near(x, y, 2)) {
    if (t === s) continue;
    const nx = t.x - x, ny = t.y - y, c = (t.x * t.x + t.y * t.y - x * x - y * y) / 2, q = [];
    for (let i = 0; i < p.length; i++) {
      const a = p[i], b = p[(i + 1) % p.length];
      const da = a[0] * nx + a[1] * ny - c, db = b[0] * nx + b[1] * ny - c;
      if (da <= 0) q.push(a);
      if (da * db < 0) {
        const k = da / (da - db);
        q.push([a[0] + (b[0] - a[0]) * k, a[1] + (b[1] - a[1]) * k, da < 0 ? t : a[2]]);
      }
    }
    p = q;
  }
  return p;
};
for (const s of seeds) { s.poly = cell(s); s.area = [s]; }

// Join neighbouring blocks into areas of up to three
for (const s of seeds) {
  if (s.area.length > 1 && rnd() < .6) continue;
  const sides = s.poly.filter(v => v[2] && v[2].area !== s.area && v[2].area.length + s.area.length <= 3);
  if (!sides.length || rnd() < .12) continue;
  const other = sides[Math.floor(rnd() * sides.length)][2].area;
  s.area.push(...other);
  for (const o of other) o.area = s.area;
}

const clip = add(add(svg, 'defs', {}), 'clipPath', { id: 'city' });
add(clip, 'path', { d: toPath(edge) });
const city = add(svg, 'g', { 'clip-path': 'url(#city)', stroke: '#1b2025', 'stroke-width': .8, 'stroke-linejoin': 'round' });
const classes = {};
let borders = '';
for (const s of seeds) {
  if (s.area.value === undefined) {
    let v = level(s.x, s.y) + (rnd() - .5) * 2.2;
    if (rnd() < .05) v -= 2;
    s.area.value = Math.round(Math.max(0, Math.min(8, v)) * 2) / 2;
  }
  (classes[s.area.value] = classes[s.area.value] || []).push(toPath(s.poly));
  s.poly.forEach((a, i) => {
    const t = a[2], b = s.poly[(i + 1) % s.poly.length];
    if (!t || t.id < s.id || t.area === s.area) return;
    const k = (rnd() - .5) * .5, mx = (a[0] + b[0]) / 2, my = (a[1] + b[1]) / 2;
    borders += `M${fix(a[0])} ${fix(a[1])}L${fix(mx - (b[1] - a[1]) * k)} ${fix(my + (b[0] - a[0]) * k)}L${fix(b[0])} ${fix(b[1])}`;
  });
}
for (const v in classes) add(city, 'path', { d: classes[v].join(''), fill: mix(+v), stroke: mix(+v), 'stroke-width': .5 });
add(city, 'path', { d: borders, fill: 'none', 'stroke-linecap': 'round' });

// Large parks, reservoirs and town centres; coordinates are thirds of a pixel from the sheet corner
const N = '#08306b', W = '#f7fbff', L = '#dceaf7', C = '#cfe1f2', B = '#b5d3e9', A = '#a6cee3', M = '#85bcdb', S = '#6baed6', D = '#4292c6', K = '#2171b5', Q = '#0a4f9c';
const sheets = [
  [880, 410, [
    [W, '790,290 880,268 915,270 905,300 915,330 850,348 800,340'], [W, '915,300 930,275 948,300 925,320'],
    [W, '993,62 1033,80 1022,150 1000,190 985,150 960,130'], [W, '1040,150 1090,148 1100,190 1060,210 1040,190'],
    [C, '1100,150 1140,152 1150,190 1110,212 1098,190'], [C, '1150,120 1178,140 1165,165 1140,150'],
    [L, '208,405 250,440 265,465 250,492 200,490 175,503 157,485 170,445'], [C, '515,315 560,345 560,375 530,382 495,370 495,340'],
    [C, '320,408 372,392 370,430 330,450'], [L, '845,350 890,345 900,380 870,405 842,390'], [C, '775,350 790,322 822,345 820,370'],
    [A, '235,620 300,645 290,700 245,690'], [B, '230,700 300,705 280,735 225,740'], [W, '300,645 350,700 345,725 295,730'],
    [N, '820,425 850,415 870,435 905,445 880,460 850,472 825,455'], [N, '795,480 835,475 830,495 800,510'],
    [N, '880,505 915,502 905,530 885,550 870,520'], [N, '805,565 880,550 895,580 850,585'],
    [N, '985,405 1050,400 1055,450 1030,445 1020,425 985,430'], [N, '1075,400 1105,410 1100,430'], [N, '765,590 790,605 790,622 765,620'],
    [N, '165,655 200,643 208,660 195,678'], [N, '165,700 200,698 195,738 175,725'], [N, '345,705 390,683 395,720 405,735 400,780 375,775 385,740'],
    [N, '445,720 475,745 440,740'], [N, '480,750 500,745 505,712 530,735 515,755 530,775 515,790'], [N, '680,725 740,735 742,755 700,770 660,778 680,755'],
    [N, '245,915 280,905 312,918 300,925 235,940'], [N, '830,800 860,830 850,855'], [N, '730,885 755,880 750,920 735,915'],
    [W, '935,605 985,578 1060,590 1060,600 1020,612 985,610 960,640'], [L, '765,780 800,765 850,780 880,795 830,800 845,855 820,830 770,800'],
    [C, '970,855 1020,850 1040,875 1020,890 975,892'], [S, '940,585 965,545 990,525 985,575'], [Q, '1000,620 1030,605 1055,640 1020,660'],
    [M, '725,770 770,755 760,790 735,790'], [K, '345,850 380,785 405,800 380,850'], [S, '1010,755 1050,760 1045,795 1020,790']]],
  [1240, 410, [
    [W, '655,450 745,393 778,440 750,480 745,508 690,512 655,480'], [W, '770,322 845,322 845,355 865,365 840,380 830,395 802,395 800,365'],
    [L, '755,475 805,435 808,485 765,490'], [N, '500,400 525,380 560,405 540,420 540,437 500,430'], [N, '145,375 185,370 190,400 155,400'],
    [N, '283,375 325,378 325,390 300,408 285,400'], [N, '990,455 1020,430 1045,430 1045,455 1010,465'], [N, '1040,465 1070,440 1100,455 1080,487 1045,480'],
    [N, '1135,560 1155,548 1168,580 1145,590'], [N, '975,755 1000,720 1010,735 995,768'], [N, '480,520 505,545 495,580 475,580 490,560'],
    [N, '740,870 760,870 765,905 818,908 780,950 740,920'], [N, '635,905 650,893 655,930 640,925'], [W, '765,860 770,832 820,855 825,900 790,905 760,890'],
    [W, '215,535 255,525 275,535 240,580'], [W, '260,300 325,290 315,320 270,315'], [W, '235,375 265,348 285,360 280,380 245,388'],
    [W, '880,620 905,610 920,635 870,660'], [A, '920,465 945,445 972,455 940,485'], [K, '248,575 300,560 330,590 290,615 255,605'],
    [D, '345,665 385,670 385,720 345,705'], [D, '280,625 330,628 335,655'], [M, '430,570 460,570 460,600 440,610'], [M, '460,605 525,600 550,640 470,640'],
    [S, '430,345 470,340 490,365 450,365'], [Q, '70,830 170,810 175,858 80,850'], [L, '855,740 895,765 890,792 855,785'], [C, '920,730 965,715 970,755 925,750'],
    [W, '90,560 122,555 105,600'], [L, '285,700 335,660 335,695 300,725'], [D, '205,480 235,435 275,465 240,505'], [C, '805,520 850,530 845,600 815,570']]],
  [880, 700, [
    [S, '690,280 735,225 795,295 770,320 745,325'], [S, '605,275 655,272 700,300 720,325 665,342 640,315 605,325'],
    [S, '605,325 640,315 665,342 745,325 740,345 685,398 650,365 605,355'], [B, '770,330 850,280 850,310 790,335'],
    [W, '765,350 840,325 860,385 820,390 780,400'], [W, '845,325 895,300 890,330 870,345'], [L, '750,390 770,390 780,440 755,430'],
    [N, '780,405 815,403 805,430 818,455 795,455'], [Q, '655,215 690,215 690,265 650,270'], [Q, '545,290 600,235 615,270 570,290'],
    [D, '485,395 545,385 580,420 583,448 540,460 485,445'], [D, '610,150 650,105 665,110 635,170'], [K, '570,160 580,120 615,115 600,150'],
    [M, '725,150 740,105 762,110 765,155 740,170'], [S, '575,180 600,168 635,185 620,210 585,205'], [S, '345,240 385,215 415,245 390,272'],
    [A, '245,245 310,190 345,215 330,240 280,240'], [A, '190,80 230,82 225,140 178,135'], [W, '120,80 190,75 195,115 165,120 130,130'],
    [L, '230,82 305,85 300,170 290,190 270,145 230,135'], [L, '1057,532 1115,535 1125,590 1085,615 1057,595'], [D, '1015,490 1065,475 1095,525 1020,535'],
    [N, '320,345 345,332 360,360 325,358'], [N, '370,355 400,345 390,368'], [W, '445,80 480,55 520,65 560,95 550,115 500,115 445,105'],
    [B, '700,400 735,375 750,390 735,430'], [N, '760,525 780,515 778,545'], [B, '940,740 1000,715 1015,740 970,760']]],
  [1240, 700, [
    [B, '545,700 655,665 670,715 692,720 685,815 655,820 570,790 565,750 540,725'], [L, '410,710 470,695 540,710 535,760 480,795 415,775'],
    [W, '360,650 420,640 480,612 480,660 470,690 410,705'], [L, '485,640 515,610 540,650 545,700 480,690'], [L, '500,770 535,755 570,790 615,835 590,860 540,805'],
    [N, '665,665 715,660 735,695 710,718 675,705'], [N, '655,650 680,638 775,622 770,650 700,660 665,665'], [M, '230,650 275,622 350,640 310,690 290,700'],
    [W, '735,405 780,395 812,435 780,475 740,465'], [W, '765,325 800,300 845,310 840,335 815,357'], [C, '620,410 660,370 698,400 630,450'],
    [L, '585,450 595,390 620,400 625,480'], [C, '630,470 670,445 680,485 630,488'], [W, '308,520 335,545 325,580 308,570'],
    [D, '370,130 405,108 440,150 400,150'], [D, '385,145 438,150 420,175'], [N, '455,90 480,80 485,115 500,140 470,130'],
    [N, '238,200 262,182 270,215 245,220'], [N, '770,250 800,245 780,262'], [W, '610,120 640,125 625,190 605,160'], [W, '700,90 735,80 740,100 715,112'],
    [W, '485,290 520,300 515,320 490,310'], [L, '175,600 228,598 220,645 185,640'], [A, '550,690 580,620 600,660 640,640 600,690'],
    [W, '460,580 495,540 508,600 480,605'], [C, '600,215 640,220 630,265 605,270'], [D, '130,265 155,262 175,285 140,292'], [M, '145,300 200,292 205,320 165,315']]]
];
for (const [ox, oy, shapes] of sheets)
  for (const [fill, s] of shapes) add(city, 'path', { d: toPath(roughen(pts(s).map(([x, y]) => [ox + x / 3, oy + y / 3]))), fill });

add(svg, 'path', { d: toPath(edge), fill: 'none', stroke: '#30363c', 'stroke-width': 1 });
for (const s of ['903,557 910,554 915,555 921,553 919,559 915,561 911,565 906,563', '1348,452 1350,446 1353,444 1353,450 1351,455', '1382,716 1384,712 1387,717'])
  add(svg, 'path', { d: toPath(roughen(pts(s))), fill: L, stroke: '#444' });

// River
const upper = 'M1062 810L1063 800Q1075 795 1084 793Q1088 784 1080 778Q1070 770 1070 760L1083 750L1094 735Q1102 729 1110 737Q1113 757 1127 757Q1136 756 1136 745';
const lower = 'M1136 748C1136 735 1139 730 1148 729C1160 730 1157 748 1166 758C1174 766 1182 767 1190 768C1202 768 1204 758 1206 746C1210 738 1225 736 1238 735C1252 735 1256 726 1257 710C1258 697 1262 696 1280 695';
const reach = 'M1280 695C1294 696 1300 703 1310 703C1318 702 1320 698 1330 698';
const line = (d, stroke, width) => add(svg, 'path', { d, fill: 'none', stroke, 'stroke-width': width, 'stroke-linecap': 'round' });
line(upper, '#555', 2.4);
line(upper, '#a8a8a8', 1.2);
line(lower, '#555', 3.6);
line(reach, '#555', 5);
line(lower, '#fff', 2.2);
line(reach, '#fff', 4);
```
